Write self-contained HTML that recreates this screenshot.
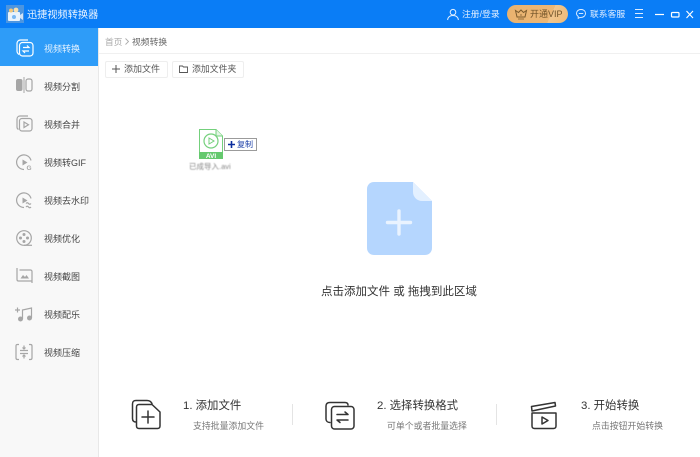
<!DOCTYPE html>
<html><head><meta charset="utf-8"><style>
*{margin:0;padding:0;box-sizing:border-box}
html,body{width:700px;height:457px;overflow:hidden;background:#fff;font-family:"Liberation Sans","Noto Sans CJK SC",sans-serif}
.t{position:absolute;white-space:nowrap;line-height:1}
svg{position:absolute;overflow:visible}
.g{fill:none;stroke:#a6a6a6;stroke-width:1.2}
.k{fill:none;stroke:#333;stroke-width:1.5;stroke-linejoin:round;stroke-linecap:round}
.w{fill:none;stroke:#fff;stroke-width:1.2}
.n{left:44px;font-size:9px;color:#444}
</style></head><body>
<div style="position:absolute;left:0;top:0;width:700px;height:28px;background:#0a7df6"></div>
<div style="position:absolute;left:0;top:28px;width:99px;height:429px;background:#f8f8f8;border-right:1px solid #e8e8e8"></div>
<div style="position:absolute;left:0;top:28px;width:98px;height:38px;background:#2e9cf8"></div>
<div style="position:absolute;left:99px;top:53px;width:601px;height:1px;background:#f0f0f0"></div>

<svg style="left:6px;top:5px" width="18" height="18" viewBox="0 0 18 18"><rect x="0" y="0" width="18" height="18" fill="#4c95e0"/><rect x="2" y="7" width="12" height="9" rx="1" fill="#e8f2fc"/><path d="M14 10l3-2v7l-3-2z" fill="#cfe3f8"/><circle cx="5" cy="5.500" r="2" fill="#f3c77a"/><circle cx="10" cy="5" r="2.400" fill="#f7e0b0"/><circle cx="8" cy="12" r="2" fill="#7ab8f2"/></svg>
<div class="t" style="left:27px;top:11px;font-size:10.200px;color:#e8f3ff">迅捷视频转换器</div>

<svg style="left:447px;top:9px" width="12" height="11" viewBox="0 0 12 11"><circle cx="6" cy="3.200" r="2.800" fill="none" stroke="#e5f1ff" stroke-width="1"/><path d="M.6 11c.4-3 2.500-4.500 5.400-4.500s5 1.500 5.400 4.500" fill="none" stroke="#e5f1ff" stroke-width="1"/></svg>
<div class="t" style="left:462px;top:10px;font-size:8.800px;color:#e0eeff">注册/登录</div>
<div style="position:absolute;left:507px;top:5px;width:61px;height:18px;border-radius:9px;background:linear-gradient(115deg,#e9b26e 0%,#ebb777 70%,#f0c68e 70%,#eeba78 100%)"></div>
<svg style="left:515px;top:9px" width="12" height="11" viewBox="0 0 12 11"><path d="M.5 1.500l3 2L6 1l2.500 2.500 3-2L10 8H2z" fill="none" stroke="#7a5a2c" stroke-width="1"/><path d="M3 10h6M5 6h2" stroke="#7a5a2c" stroke-width=".8"/></svg>
<div class="t" style="left:530px;top:10px;font-size:9px;color:#6f5228">开通VIP</div>
<svg style="left:576px;top:9px" width="10" height="10" viewBox="0 0 10 10"><path d="M5 .5C2.300.5.500 2.200.500 4.400c0 1.300.7 2.300 1.700 3v2l1.800-1h1c2.700 0 4.500-1.700 4.500-4S7.700.5 5 .5z" fill="none" stroke="#e5f1ff" stroke-width=".9"/><path d="M2.800 4.500h4.400" stroke="#e5f1ff" stroke-width=".9"/></svg>
<div class="t" style="left:590px;top:10px;font-size:8.800px;color:#e0eeff">联系客服</div>
<svg style="left:635px;top:9px" width="60" height="11" viewBox="0 0 60 11"><path d="M0 .5h8M0 4.500h8M0 8.500h8" stroke="#dcecff" fill="none"/><path d="M20 5.500h9" stroke="#fff" stroke-width="1.200"/><rect x="36.500" y="3.500" width="7.500" height="4.500" rx="1" fill="none" stroke="#fff" stroke-width="1.200"/><path d="M51.500 2l6.500 7M58 2l-6.500 7" stroke="#fff" stroke-width="1.100"/></svg>

<svg style="left:16px;top:39px" width="18" height="18" viewBox="0 0 18 18"><path d="M3 15.500C1.500 14.500 1 13.500 1 12V4.500C1 2.500 2.500 1 4.500 1H12" class="w"/><rect x="3.500" y="3.500" width="13.500" height="13.500" rx="3" class="w"/><path d="M7 8.500h6l-2-2M13 12H7l2 2" class="w"/></svg>
<div class="t n" style="top:45px;color:#e4f2ff">视频转换</div>

<svg style="left:16px;top:77px" width="17" height="16" viewBox="0 0 17 16"><rect x="0" y="2" width="6.500" height="12" rx="2" fill="#a6a6a6"/><path d="M8 0v16" stroke="#a6a6a6"/><rect x="10" y="2" width="6" height="12" rx="2" class="g"/></svg>
<div class="t n" style="top:83px">视频分割</div>

<svg style="left:16px;top:115px" width="17" height="17" viewBox="0 0 17 17"><path d="M2.500 14.500C1.500 14 1 13 1 12V4c0-1.700 1.300-3 3-3h8" class="g"/><rect x="3.500" y="3.500" width="12.500" height="12.500" rx="2.500" class="g"/><path d="M8 7l4.500 2.700L8 12.500z" class="g"/></svg>
<div class="t n" style="top:121px">视频合并</div>

<svg style="left:16px;top:154px" width="17" height="17" viewBox="0 0 17 17"><path d="M15 6.500A7.300 7.300 0 1 0 8 15.500" class="g"/><path d="M6.500 5.500l5 3-5 3z" fill="#a6a6a6"/><text x="10.500" y="16" font-size="6.500" font-weight="bold" fill="#a6a6a6" font-family="Liberation Sans">G</text></svg>
<div class="t n" style="top:159px">视频转GIF</div>

<svg style="left:16px;top:192px" width="17" height="17" viewBox="0 0 17 17"><path d="M15 6.500A7.300 7.300 0 1 0 8 15.500" class="g"/><path d="M6.500 5.500l5 3-5 3z" fill="#a6a6a6"/><path d="M10 11.500q1.300-1.500 2.500 0t2.500 0M10 15q1.300-1.500 2.500 0t2.500 0" class="g" stroke-width="1"/></svg>
<div class="t n" style="top:197px">视频去水印</div>

<svg style="left:16px;top:230px" width="17" height="17" viewBox="0 0 17 17"><circle cx="8" cy="8" r="7.300" class="g"/><circle cx="8" cy="4.500" r="1.500" fill="#a6a6a6"/><circle cx="8" cy="11.500" r="1.500" fill="#a6a6a6"/><circle cx="4.500" cy="8" r="1.500" fill="#a6a6a6"/><circle cx="11.500" cy="8" r="1.500" fill="#a6a6a6"/><path d="M8 15.300h8" class="g"/></svg>
<div class="t n" style="top:235px">视频优化</div>

<svg style="left:16px;top:268px" width="17" height="16" viewBox="0 0 17 16"><path d="M1 0v11.500c0 1 .5 1.500 1.500 1.500H16" class="g"/><path d="M3.500 2h11c.8 0 1.500.7 1.500 1.500V15" class="g"/><path d="M4.500 10.500l2.500-3.500 2 2 1.500-2 2.500 3.500z" fill="#a6a6a6"/></svg>
<div class="t n" style="top:273px">视频截图</div>

<svg style="left:15px;top:307px" width="18" height="15" viewBox="0 0 18 15"><path d="M0 3h5M2.500 .5v5" class="g"/><path d="M7.500 12V3L16.500 1V11" class="g"/><circle cx="5.500" cy="12" r="2.500" fill="#a6a6a6"/><circle cx="14.500" cy="11" r="2.500" fill="#a6a6a6"/></svg>
<div class="t n" style="top:311px">视频配乐</div>

<svg style="left:15px;top:344px" width="18" height="16" viewBox="0 0 18 16"><path d="M4 .5H2.500C1.500.5 1 1 1 2v12c0 1 .5 1.500 1.500 1.500H4M14 .5h1.500c1 0 1.500.5 1.500 1.500v12c0 1-.5 1.500-1.500 1.500H14" class="g"/><path d="M5 6.500h8M5 9.500h8M9 1.500v3M7.500 3.500L9 5 10.500 3.500M9 14.500v-3M7.500 12.500L9 11l1.500 1.500" class="g" stroke-width="1"/></svg>
<div class="t n" style="top:349px">视频压缩</div>

<div class="t" style="left:105px;top:37.500px;font-size:8.700px;color:#aaa">首页</div>
<svg style="left:125px;top:38px" width="4" height="7" viewBox="0 0 4 7"><path d="M.5.500L3.500 3.500.5 6.500" fill="none" stroke="#aaa" stroke-width=".9"/></svg>
<div class="t" style="left:132px;top:37.500px;font-size:8.800px;color:#666">视频转换</div>

<div style="position:absolute;left:105px;top:61px;width:63px;height:17px;border:1px solid #eee;border-radius:2px"></div>
<svg style="left:112px;top:65px" width="8" height="8" viewBox="0 0 8 8"><path d="M4 0v8M0 4h8" stroke="#555"/></svg>
<div class="t" style="left:124px;top:65px;font-size:9px;color:#555">添加文件</div>
<div style="position:absolute;left:172px;top:61px;width:72px;height:17px;border:1px solid #eee;border-radius:2px"></div>
<svg style="left:179px;top:64.500px" width="9" height="8" viewBox="0 0 9 8"><path d="M.5 1h3l1 1h4v5.500h-8z" fill="none" stroke="#555" stroke-width=".9"/></svg>
<div class="t" style="left:192px;top:65px;font-size:8.900px;color:#555">添加文件夹</div>

<svg style="left:199px;top:129px" width="24" height="30" viewBox="0 0 24 30"><path d="M.5.500H17L23.500 7V29.500H.5z" fill="#fff" stroke="#74d07c"/><path d="M17 .5V7h6.500" fill="#e4f6e6" stroke="#74d07c"/><circle cx="12" cy="12" r="7" fill="none" stroke="#74d07c" stroke-width="1.200"/><path d="M10 9l5 3-5 3z" fill="none" stroke="#74d07c"/><rect x="0" y="23" width="24" height="7" fill="#65c96e"/><text x="12" y="29" font-size="6.500" font-weight="bold" text-anchor="middle" fill="#fff" font-family="Liberation Sans">AVI</text></svg>
<div style="position:absolute;left:224px;top:138px;width:33px;height:13px;background:#fff;border:1px solid #9b9b9b"></div>
<svg style="left:228px;top:141px" width="7" height="7" viewBox="0 0 7 7"><path d="M3.500 0v7M0 3.500h7" stroke="#0b2d9e" stroke-width="1.600"/></svg>
<div class="t" style="left:237px;top:141px;font-size:8px;color:#1b3fa8">复制</div>
<div class="t" style="left:189px;top:163px;font-size:7.500px;color:#888;filter:blur(.5px)">已成导入.avi</div>

<svg style="left:366.500px;top:182px" width="65" height="73" viewBox="0 0 65 73"><path d="M7 0H46L65 19V66c0 4-3 7-7 7H7c-4 0-7-3-7-7V7C0 3 3 0 7 0z" fill="#b5d6fe"/><path d="M46 0L65 19H55c-5 0-9-4-9-9z" fill="#e3f0ff"/><path d="M32 29V52M20.500 40.500H43.500" stroke="#e9f3ff" stroke-width="3.400" stroke-linecap="round"/></svg>
<div class="t" style="left:321px;top:287px;font-size:11.500px;color:#333">点击添加文件 或 拖拽到此区域</div>

<svg style="left:131px;top:399px" width="30" height="31" viewBox="0 0 30 31"><path d="M5 23C2.500 23 1.500 21.500 1.500 19.500V5C1.500 2.500 2.500 1.500 5 1.500h11c2.500 0 4 1 5 3" class="k"/><path d="M8 5.500H21L29 13V27c0 1.500-1 2.500-2.500 2.500H8c-1.500 0-2.500-1-2.500-2.500V8c0-1.500 1-2.500 2.500-2.500z" class="k" fill="#fff"/><path d="M17 12V24M11 18H23" class="k"/></svg>
<div class="t" style="left:183px;top:401px;font-size:11.400px;color:#333">1. 添加文件</div>
<div class="t" style="left:193px;top:422px;font-size:8.900px;color:#777">支持批量添加文件</div>
<div style="position:absolute;left:292px;top:404px;width:1px;height:21px;background:#e4e4e4"></div>

<svg style="left:325px;top:401px" width="30" height="29" viewBox="0 0 30 29"><path d="M5 21.500C2.500 21.500 1 20 1 18V5C1 2.500 2.500 1.500 5 1.500h15c2 0 3 1 3 2.500" class="k"/><rect x="6.500" y="5.500" width="22.500" height="22.500" rx="3" class="k" fill="#fff"/><path d="M12 13.500H23L20 11M23 19H12l3 2.500" class="k" stroke-width="1.100"/></svg>
<div class="t" style="left:377px;top:401px;font-size:11.400px;color:#333">2. 选择转换格式</div>
<div class="t" style="left:387px;top:422px;font-size:8.900px;color:#777">可单个或者批量选择</div>
<div style="position:absolute;left:496px;top:404px;width:1px;height:21px;background:#e4e4e4"></div>

<svg style="left:530px;top:401px" width="27" height="28" viewBox="0 0 27 28"><path d="M2 10L1.500 5.500 25 1.500l.5 3.500z" class="k"/><path d="M2 12H26V25c0 1.500-1 2.500-2.500 2.500H4.500C3 27.500 2 26.500 2 25z" class="k"/><path d="M12 16L18 19.500 12 23z" class="k" stroke-width="1.300"/></svg>
<div class="t" style="left:581px;top:401px;font-size:11.400px;color:#333">3. 开始转换</div>
<div class="t" style="left:592px;top:422px;font-size:8.900px;color:#777">点击按钮开始转换</div>
</body></html>
